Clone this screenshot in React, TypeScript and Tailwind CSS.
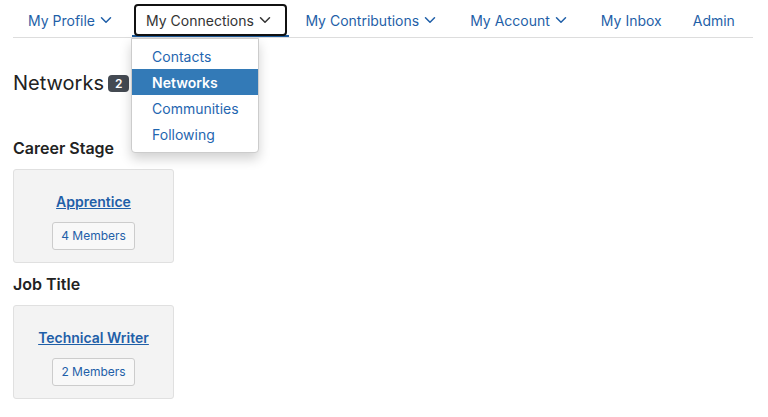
import { ChevronDown } from "lucide-react";

const navItems = [
  { label: "My Profile", caret: true },
  { label: "My Connections", caret: true, active: true },
  { label: "My Contributions", caret: true },
  { label: "My Account", caret: true },
  { label: "My Inbox", caret: false },
  { label: "Admin", caret: false },
];

const menu = ["Contacts", "Networks", "Communities", "Following"];

const groups = [
  { title: "Career Stage", name: "Apprentice", members: 4 },
  { title: "Job Title", name: "Technical Writer", members: 2 },
];

export default function App() {
  return (
    <div className="min-h-[417px] bg-white px-[13px] text-[#333]" style={{ fontFamily: "Inter, 'Noto Sans', sans-serif" }}>
      {/* Nav */}
      <nav className="flex h-[38px] w-[740px] items-stretch whitespace-nowrap border-b border-[#dddddd] pl-[15px]">
        {navItems.map((item, i) =>
          item.active ? (
            <div key={item.label} className="relative ml-[1px] mr-[1px] flex shrink-0 items-start border-b-2 border-[#1c5a9a] px-[2px] pt-[4px]">
              <div className="flex h-[32px] items-center rounded-[4px] border-2 border-[#111] pl-[10px] pr-[11px] text-[14px] text-[#333]">
                {item.label}
                <ChevronDown size={18} strokeWidth={2} className="ml-[2px]" />
              </div>
              <div className="absolute left-[-1px] top-[38px] z-10 w-[128px] rounded-b-[4px] border border-[#ccc] bg-white pb-[5px] pt-[4px] shadow-[0_6px_12px_rgba(0,0,0,0.18)]">
                {menu.map((m) => (
                  <div
                    key={m}
                    className={
                      m === "Networks"
                        ? "flex h-[26px] items-center bg-[#337ab7] pl-[20px] text-[14px] font-semibold text-white"
                        : "flex h-[26px] items-center pl-[20px] text-[14px] text-[#1f66b0]"
                    }
                  >
                    {m}
                  </div>
                ))}
              </div>
            </div>
          ) : (
            <div
              key={item.label}
              className={(i === 0 ? "pr-[16px]" : "px-[15.5px]") + " flex shrink-0 items-center pt-[3px] text-[14px] text-[#1f5fa8]"}
            >
              {item.label}
              {item.caret && <ChevronDown size={18} strokeWidth={2} className="ml-[2px]" />}
            </div>
          )
        )}
      </nav>

      {/* Heading */}
      <div className="mt-[33px] flex items-center gap-[4px]">
        <h1 className="text-[20px] leading-[24px] text-[#222]">Networks</h1>
        <span className="rounded-[4px] bg-[#444a52] px-[7px] text-[12px] font-semibold leading-[17px] text-white">2</span>
      </div>

      <div className="mt-[43px]">
        {groups.map((g) => (
          <div key={g.title} className="mb-[11px]">
            <h2 className="text-[16px] font-semibold leading-[20px] text-[#222]">{g.title}</h2>
            <div className="mt-[11px] flex h-[94px] w-[161px] flex-col items-center justify-center gap-[10px] rounded-[3px] border border-[#e0e0e0] bg-[#f3f3f3] pt-[8px]">
              <a href="#" className="text-[14px] font-semibold text-[#1f5fa8] underline">{g.name}</a>
              <span className="rounded-[3px] border border-[#cccccc] bg-[#f8f8f8] px-[8px] py-[4px] text-[12px] text-[#1f5fa8]">
                {g.members} Members
              </span>
            </div>
          </div>
        ))}
      </div>
    </div>
  );
}
